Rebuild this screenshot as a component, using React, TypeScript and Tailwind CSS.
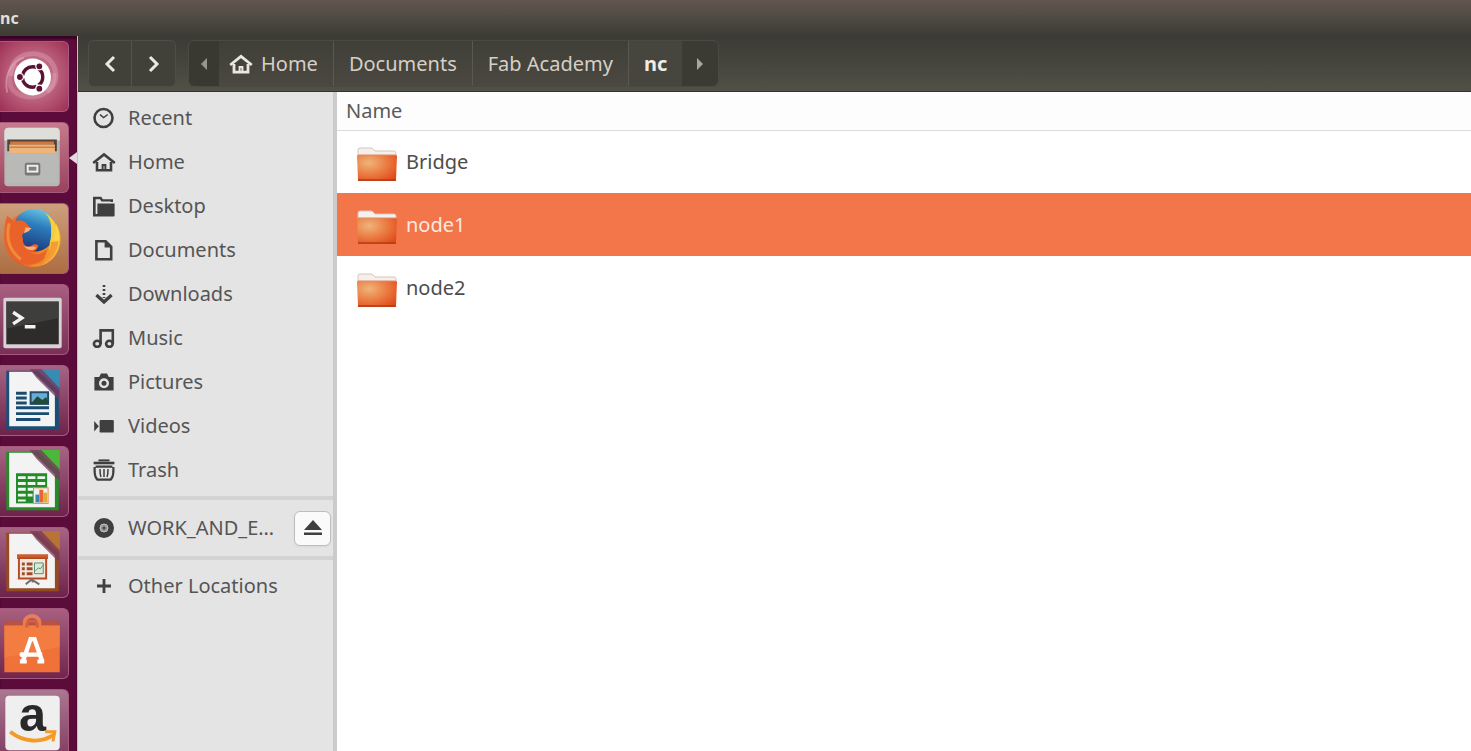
import React from 'react';

type IconProps = { children: React.ReactNode };

function Icon({ children }: IconProps) {
  return (
    <svg viewBox="0 0 24 24" className="size-6 shrink-0" fill="none" stroke="#3f3f3f" strokeWidth="2.6" aria-hidden="true">
      {children}
    </svg>
  );
}

function HouseShape() {
  return (
    <>
      <path d="M1.2 13 12 4.400l10.800 8.600" />
      <path d="M5 12v8.200h14V12" />
      <path d="M10.600 20v-5h2.800v5" strokeWidth="2" />
    </>
  );
}

const places = [
  {
    name: 'Recent',
    icon: (
      <>
        <circle cx="11.5" cy="12" r="9" />
        <path d="m8 8.6 3.6 2.9 4.2-3" strokeWidth="1.5" />
      </>
    ),
  },
  { name: 'Home', icon: <HouseShape /> },
  {
    name: 'Desktop',
    icon: (
      <>
        <path d="M2.2 21V4h6.400l1.600 2.400h9.600V8" strokeWidth="2.400" />
        <path d="M5.400 9.400h17.200v11.800a1.200 1.200 0 0 1-1.200 1.200H1V4.400h2.400V20h2z" fill="#3f3f3f" stroke="none" />
      </>
    ),
  },
  {
    name: 'Documents',
    icon: (
      <>
        <path d="M4.4 3.2h9.2l5.6 5.6v12.4H4.4z" />
        <path d="M12.6 3v6.6h6.4z" fill="#3f3f3f" stroke="none" />
      </>
    ),
  },
  {
    name: 'Downloads',
    icon: (
      <>
        <path d="M12 3v13" strokeDasharray="2 2" />
        <path d="m4.400 13 7.600 7 7.600-7" strokeWidth="3.200" />
      </>
    ),
  },
  {
    name: 'Music',
    icon: (
      <>
        <ellipse cx="5.2" cy="17.8" rx="3.3" ry="3" />
        <ellipse cx="17.4" cy="17.8" rx="3.3" ry="3" />
        <path d="M8.600 18V4.400h12.200V18" />
      </>
    ),
  },
  {
    name: 'Pictures',
    icon: (
      <g stroke="none">
        <path d="M2.4 7h4.8l1.8-3.4h6L16.800 7h4.800v13.400H2.400z" fill="#3f3f3f" />
        <circle cx="12" cy="13.200" r="5" fill="#e4e4e4" />
        <circle cx="12" cy="13.200" r="2.500" fill="#3f3f3f" />
      </g>
    ),
  },
  {
    name: 'Videos',
    icon: (
      <g fill="#3f3f3f" stroke="none">
        <rect x="7.600" y="6" width="14.200" height="12.600" rx="1.200" />
        <path d="M2.200 7 6.800 12.200l-4.600 5.200z" />
      </g>
    ),
  },
  {
    name: 'Trash',
    icon: (
      <>
        <path d="M6.500 2.400h11" strokeWidth="2" />
        <path d="M1.600 5h20.800" strokeWidth="2.600" />
        <path d="M3.600 8.600h16.800M2.600 9v4.400c.1 4 1.200 6.600 2.800 8.200h13.200c1.600-1.600 2.700-4.200 2.800-8.200V9" strokeWidth="2.200" />
        <path d="M8 11c0 4 .2 6 1 8M12 11v8M16 11c0 4-.2 6-1 8" strokeWidth="1.500" />
      </>
    ),
  },
];

/* Dock */

function DocPage({ color, corner }: { color: string; corner: string }) {
  return (
    <>
      <path d="M6 5h32l22 20v40H6z" fill={color} />
      <path d="M38 3h23v23z" fill={corner} />
      <path d="M9 6h24l23 22v34H9z" fill="#f4f3f3" />
      <path d="M30 3h12l19 20v11l-4-2-20-20z" fill="#77385c" opacity=".75" />
    </>
  );
}

const dockApps = [
  {
    name: 'Search your computer',
    tile: 'bg-radial from-[#d68ca2] to-[#9c2d55]',
    art: (
      <>
        <g fill="none" stroke="#e4b4c2">
          <path d="M11 35C8 9 46 4 55 25c5 12 0 22-7 26" strokeWidth="5" opacity=".35" />
          <path d="M55 32c2 25-28 31-42 18C7 42 9 29 16 23" strokeWidth="5" opacity=".3" />
          <path d="M7 52C3 34 11 20 24 16" strokeWidth="2" opacity=".5" />
        </g>
        <circle cx="33" cy="36" r="19" fill="#fff" />
        <circle cx="33" cy="36" r="10.500" fill="none" stroke="#5b1233" strokeWidth="3.500" strokeDasharray="20 2" strokeDashoffset="10" />
        <g fill="#5b1233" stroke="#fff" strokeWidth="1.200">
          <circle cx="20" cy="36" r="3.600" />
          <circle cx="40" cy="25" r="3.600" />
          <circle cx="40" cy="48" r="3.600" />
        </g>
      </>
    ),
  },
  {
    name: 'Files',
    tile: 'bg-linear-to-b from-[#c77a8b] to-[#9a4260]',
    art: (
      <>
        <rect x="4" y="5" width="57" height="60" rx="4" fill="#b6b6b3" />
        <path d="M8 5h49q4 0 4 5v8H4v-8q0-5 4-5z" fill="#dededb" />
        <path d="M7 17h51v12H7z" fill="#51443d" />
        <path d="M10 19h45v3H10z" fill="#d5773d" />
        <path d="M9 22h47v9H9z" fill="#efb47a" />
        <path d="M9 25h47" stroke="#d87e43" strokeWidth="1.500" />
        <path d="M6 31h53v31H6z" fill="#b9bab7" />
        <rect x="25" y="41" width="16" height="13" rx="2" fill="#777876" />
        <rect x="27" y="43" width="12" height="8" fill="#f0f0ee" />
        <rect x="29" y="45" width="8" height="4" fill="#818280" />
      </>
    ),
    running: true,
  },
  {
    name: 'Firefox',
    tile: 'bg-linear-to-b from-[#cda07c] to-[#ad6d42]',
    art: (
      <>
        <defs>
          <linearGradient id="fox" x1="0" y1="0" x2="1" y2=".3">
            <stop offset="0" stopColor="#ef8436" />
            <stop offset=".5" stopColor="#e65a27" />
            <stop offset="1" stopColor="#f7a52c" />
          </linearGradient>
          <linearGradient id="globe" x1=".7" y1="0" x2=".4" y2="1">
            <stop offset="0" stopColor="#6cc6e6" />
            <stop offset=".4" stopColor="#2a7cbb" />
            <stop offset="1" stopColor="#1d3478" />
          </linearGradient>
        </defs>
        <circle cx="33" cy="36" r="29" fill="url(#fox)" />
        <circle cx="35" cy="27" r="22" fill="url(#globe)" />
        <path d="M7 12c3 2 5 4 7 6 4-2 8-2 12 1l5 6c-2 3-6 3-8 6-2 2 1 4 0 7 1 5 5 7 9 5 3-2 5-2 7 0-2 6-6 7-10 7 9 4 16 1 20-5l-6 16C20 67 2 55 4 30 4 23 5 17 7 12z" fill="#e9622a" />
        <path d="M46 9c12 8 16 19 9 35l-4 6c-2-11 2-13 1-22 1-8-2-14-6-19z" fill="#f8cc3e" />
        <path d="M57 20c9 17 2 36-14 43 9-10 14-21 14-43z" fill="#fbd548" />
        <path d="M52 39c0 14-10 23-23 24 17 5 29-9 31-25z" fill="#f1902f" opacity=".8" />
        <path d="M26 24l6 1-3 3-5 2zM24 43c5 3 9-1 13 2-3 3-9 4-13-2z" fill="#f6b183" />
        <path d="M9 20c-4 16 0 28 12 37" fill="none" stroke="#f08b3c" strokeWidth="3" />
      </>
    ),
  },
  {
    name: 'Terminal',
    tile: 'bg-linear-to-b from-[#a85f80] to-[#783056]',
    art: (
      <>
        <rect x="3" y="13" width="60" height="52" rx="2" fill="#d9d2d5" />
        <rect x="6" y="17" width="54" height="44" fill="#2d2c2b" />
        <path d="M6 17h54v17L6 45z" fill="#464644" opacity=".7" />
        <path d="m13 28 9 6-9 6M25 43h11" fill="none" stroke="#f3f3f1" strokeWidth="3.500" />
      </>
    ),
  },
  {
    name: 'LibreOffice Writer',
    tile: 'bg-linear-to-b from-[#a66483] to-[#6d234b]',
    art: (
      <>
        <DocPage color="#174f77" corner="#378bb5" />
        <path d="M16 28h11M16 33h11M16 38h11M16 43h34M16 49h34M16 55h25" stroke="#194c70" strokeWidth="3" />
        <rect x="30" y="26" width="20" height="14" fill="#1e4b68" />
        <path d="M32 28h16v9H32z" fill="#69add4" />
        <path d="m31 39 7-8 5 4 4-3 3 7z" fill="#234b39" />
      </>
    ),
  },
  {
    name: 'LibreOffice Calc',
    tile: 'bg-linear-to-b from-[#a66483] to-[#6d234b]',
    art: (
      <>
        <DocPage color="#258b28" corner="#4bb83b" />
        <path d="M16 27h32v31H16z" fill="#238b27" />
        <path d="M18 30h8v3h-8zm10 0h8v3h-8zm10 0h8v3h-8zM18 36h8v3h-8zm10 0h8v3h-8zm10 0h8v3h-8zM18 42h8v3h-8zm10 0h8v3h-8zM18 48h8v3h-8zm10 0h5v3h-5zM18 54h8v2h-8z" fill="#edf6eb" />
        <rect x="34" y="42" width="15" height="16" fill="#eee" stroke="#e58745" />
        <path d="M36 49h4v8h-4z" fill="#3685b4" />
        <path d="M40 44h4v13h-4z" fill="#e96632" />
        <path d="M44 47h4v10h-4z" fill="#e1ab34" />
      </>
    ),
  },
  {
    name: 'LibreOffice Impress',
    tile: 'bg-linear-to-b from-[#a66483] to-[#6d234b]',
    art: (
      <>
        <DocPage color="#944b20" corner="#b87437" />
        <path d="M17 27h32v5H17z" fill="#c85e31" />
        <path d="M19 31h28v21H19z" fill="#f3e8df" stroke="#b84a23" strokeWidth="2" />
        <path d="M22 37h3M22 42h3M22 47h3M27 37h6M27 42h6M27 47h6" stroke="#a14b2a" strokeWidth="3" />
        <path d="M35 36h9v11h-9z" fill="#dceada" stroke="#568e70" />
        <path d="m36 44 3-3 2 1 3-4" fill="none" stroke="#568e70" />
        <path d="m26 58 6-5 8 5M33 53v3" fill="none" stroke="#6d6c69" strokeWidth="2" />
      </>
    ),
  },
  {
    name: 'Ubuntu Software',
    tile: 'bg-linear-to-b from-[#a7607e] to-[#71254e]',
    art: (
      <>
        <path d="M5 12h54l2 8H3z" fill="#b9523e" />
        <path d="M25 20v-6c0-9 15-9 15 0v6" fill="none" stroke="#ec7c59" strokeWidth="4" />
        <path d="M4 17h57v48H4z" fill="#f07239" />
        <path d="M4 17h57v22L4 50z" fill="#f48349" opacity=".6" />
        <path d="M27 19v-3c0-5 11-5 11 0v3" fill="none" stroke="#d4603f" strokeWidth="3" />
        <path d="M23 54 31 31h4l8 23M21 47h22" fill="none" stroke="#fff" strokeWidth="4.500" />
        <circle cx="22" cy="47" r="2.500" fill="#fff" />
        <path d="M20 54h7M38 54h7" stroke="#fff" strokeWidth="4" />
      </>
    ),
  },
  {
    name: 'Amazon',
    tile: 'bg-linear-to-b from-[#aa7890] to-[#813a60]',
    art: (
      <>
        <rect x="5" y="6" width="56" height="56" rx="4" fill="#efefef" />
        <text x="33" y="42" textAnchor="middle" fontFamily="Liberation Sans, sans-serif" fontWeight="700" fontSize="50" fill="#292929">a</text>
        <path d="M10 43c14 11 32 12 45 3" fill="none" stroke="#f49a27" strokeWidth="4" />
        <path d="m46 43 10 0-2 10" fill="none" stroke="#f49a27" strokeWidth="3" />
      </>
    ),
  },
];

function Dock() {
  return (
    <nav aria-label="Launcher" className="flex w-[78px] shrink-0 flex-col gap-[10px] overflow-hidden border-r border-[#d8b9ca] bg-[#5b0c3b] pt-[5px] shadow-[inset_0_3px_2px_#390425]">
      {dockApps.map((app) => (
        <button
          key={app.name}
          aria-label={app.name}
          className="relative h-[71px] w-full shrink-0"
        >
          <span className={`block h-full w-[69px] rounded-r-md border border-l-0 border-[#a7597f] ${app.tile}`}>
            <svg viewBox="0 0 69 71" className="h-full w-full overflow-visible" aria-hidden="true">{app.art}</svg>
          </span>
          {app.running && (
            <svg viewBox="0 0 8 12" className="absolute top-[30px] right-0 h-3 w-2" aria-hidden="true">
              <path d="M8 0v12L0 6z" fill="#e5d9df" />
            </svg>
          )}
        </button>
      ))}
    </nav>
  );
}

/* Window parts */

function Toolbar() {
  const crumb = 'flex items-center border-r border-[#5b594f] px-[15px]';
  return (
    <header className="flex h-14 shrink-0 items-stretch border-b border-[#34332d] bg-linear-to-b from-[#3c3b35] via-[#45453d] to-[#515148] px-[10px] pt-1 pb-1 text-xl text-[#d5d0c7]">
      <div className="flex rounded-md border border-[#4e4e45] bg-[#414139]">
        <button aria-label="Back" className="flex w-[43px] items-center justify-center border-r border-[#55544b]">
          <svg viewBox="0 0 16 20" className="h-5 w-4" fill="none" stroke="#ece9e2" strokeWidth="3" aria-hidden="true">
            <path d="m12 3-7 7 7 7" />
          </svg>
        </button>
        <button aria-label="Forward" className="flex w-[43px] items-center justify-center">
          <svg viewBox="0 0 16 20" className="h-5 w-4" fill="none" stroke="#ece9e2" strokeWidth="3" aria-hidden="true">
            <path d="m4 3 7 7-7 7" />
          </svg>
        </button>
      </div>
      <nav aria-label="Path" className="ml-3 flex rounded-md border border-[#4a4a41] bg-linear-to-b from-[#3f3f38] to-[#4b4840]">
        <button aria-label="Scroll left" className="flex w-[30px] items-center justify-center rounded-l-md bg-[#393932]">
          <svg viewBox="0 0 8 12" className="h-3 w-2" aria-hidden="true"><path d="M7 0v12L1 6z" fill="#99958c" /></svg>
        </button>
        <button className="flex items-center gap-2 border-r border-[#5b594f] px-[10px] pr-[15px]">
          <svg viewBox="0 0 24 24" className="size-6" fill="none" stroke="#ebe8e0" strokeWidth="2.800" aria-hidden="true">
            <HouseShape />
          </svg>
          Home
        </button>
        <button className={crumb}>Documents</button>
        <button className={crumb}>Fab Academy</button>
        <button className="bg-[#46463e] px-[15px] font-bold text-[#efece5]" aria-current="page">nc</button>
        <button aria-label="Scroll right" className="flex w-9 items-center justify-center rounded-r-md bg-[#3b3b34]">
          <svg viewBox="0 0 8 12" className="h-3 w-2" aria-hidden="true"><path d="M1 0v12l6-6z" fill="#aaa69d" /></svg>
        </button>
      </nav>
    </header>
  );
}

function Sidebar() {
  const row = 'flex h-11 w-full items-center gap-3 pl-[14px] text-left';
  return (
    <aside className="w-[259px] shrink-0 border-r-4 border-[#cbcbcb] bg-[#e4e4e4] pt-1 text-xl text-[#555]">
      <ul>
        {places.map((place) => (
          <li key={place.name}>
            <button className={row}>
              <Icon>{place.icon}</Icon>
              {place.name}
            </button>
          </li>
        ))}
      </ul>
      <div className="mt-1 flex items-center border-y-4 border-[#d3d3d3] py-[6px]">
        <button className={`${row} min-w-0 flex-1`}>
          <Icon>
            <circle cx="12" cy="12" r="7" strokeWidth="6" />
            <circle cx="12" cy="12" r="4" fill="#999" stroke="#bbb" strokeWidth="1" />
            <circle cx="12" cy="12" r="1.500" fill="#444" stroke="none" />
          </Icon>
          <span className="whitespace-nowrap">WORK_AND_E…</span>
        </button>
        <button aria-label="Eject" className="mr-[2px] ml-2 flex h-[35px] w-[37px] items-center justify-center rounded-md border border-[#bdbdbd] bg-[#fafafa] shadow-xs">
          <svg viewBox="0 0 18 16" className="h-4 w-[18px]" fill="#3f3f3f" aria-hidden="true">
            <path d="M9 0 18 10H0zM0 12.500h18V15H0z" />
          </svg>
        </button>
      </div>
      <button className={`${row} mt-1`}>
        <Icon><path d="M12 5v14M5 12h14" strokeWidth="2.800" /></Icon>
        Other Locations
      </button>
    </aside>
  );
}

function Folder() {
  return (
    <svg viewBox="0 -4 42 40" className="h-10 w-[42px] shrink-0" aria-hidden="true">
      <defs>
        <radialGradient id="folder" cx=".3" cy=".3" r=".85">
          <stop offset="0" stopColor="#efb47b" />
          <stop offset=".5" stopColor="#eb7f45" />
          <stop offset="1" stopColor="#e24a1b" />
        </radialGradient>
      </defs>
      <path d="M2 11V4q0-2 2-2h11q2 0 3 2l1 1h19q2 0 2 2v6z" fill="#f6f0ed" stroke="#d4c5bf" />
      <path d="M1 10q0-1 2-1h36q2 0 2 1l-1 24q0 1-1 1H3q-1 0-1-1z" fill="url(#folder)" />
      <path d="M2 9h38" stroke="#dc8a66" />
      <path d="M2 34h38" stroke="#b13d17" strokeWidth="1.500" />
    </svg>
  );
}

const folders = [
  { name: 'Bridge', selected: false },
  { name: 'node1', selected: true },
  { name: 'node2', selected: false },
];

function FileList() {
  return (
    <main className="min-w-0 flex-1 bg-white text-xl text-[#4c4c4c]">
      <table className="w-full border-collapse">
        <thead>
          <tr className="h-[38px] border-b border-[#dcdcdc] bg-[#fdfdfd]">
            <th className="px-[9px] text-left font-normal text-[#5a5a5a]">Name</th>
          </tr>
        </thead>
        <tbody>
          {folders.map((folder) => (
            <tr
              key={folder.name}
              aria-selected={folder.selected}
              className={folder.selected ? 'h-[63px] bg-[#f27649] text-[#fbe9e1]' : 'h-[63px]'}
            >
              <td className="pl-[19px]">
                <div className="flex items-center gap-2">
                  <Folder />
                  <span>{folder.name}</span>
                </div>
              </td>
            </tr>
          ))}
        </tbody>
      </table>
    </main>
  );
}

export default function App() {
  return (
    <div className="flex h-screen flex-col overflow-hidden font-['Noto_Sans',sans-serif]">
      <div className="flex h-9 shrink-0 items-center bg-linear-to-b from-[#635550] via-[#4d4b43] to-[#3c3b34] text-base font-bold text-[#e3dfd6]">
        nc
      </div>
      <div className="flex min-h-0 flex-1">
        <Dock />
        <div className="flex min-w-0 flex-1 flex-col">
          <Toolbar />
          <div className="flex min-h-0 flex-1">
            <Sidebar />
            <FileList />
          </div>
        </div>
      </div>
    </div>
  );
}
